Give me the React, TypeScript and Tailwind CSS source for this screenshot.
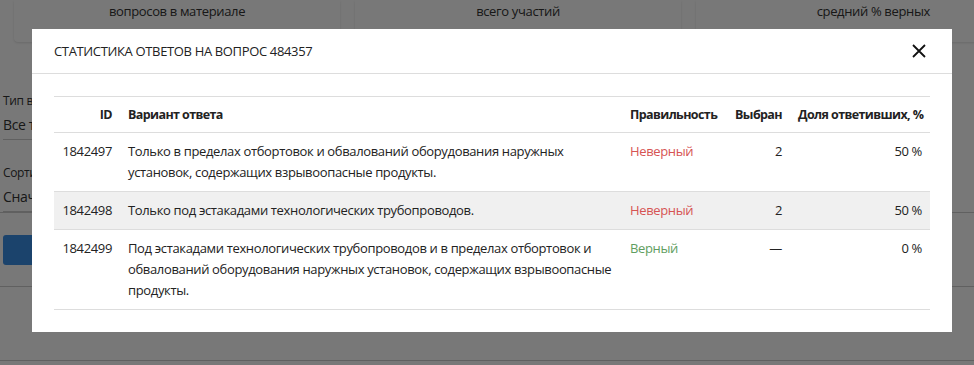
import React from "react";

type Answer = {
  id: number;
  text: string;
  correct: boolean;
  chosen: string;
  share: string;
};

const answers: Answer[] = [
  {
    id: 1842497,
    text: "Только в пределах отбортовок и обвалований оборудования наружных установок, содержащих взрывоопасные продукты.",
    correct: false,
    chosen: "2",
    share: "50 %",
  },
  {
    id: 1842498,
    text: "Только под эстакадами технологических трубопроводов.",
    correct: false,
    chosen: "2",
    share: "50 %",
  },
  {
    id: 1842499,
    text: "Под эстакадами технологических трубопроводов и в пределах отбортовок и обвалований оборудования наружных установок, содержащих взрывоопасные продукты.",
    correct: true,
    chosen: "—",
    share: "0 %",
  },
];

const stats = ["вопросов в материале", "всего участий", "средний % верных"];

const Background = () => (
  <div className="text-[#333]">
    <div className="flex h-[42px] gap-[15px] pl-[14px]">
      {stats.map((s, i) => (
        <div
          key={s}
          className={
            i === 2
              ? "flex w-[326px] shrink-0 justify-end rounded-b bg-white pr-[92px] text-[13px] shadow-sm"
              : "flex w-[326px] shrink-0 justify-center rounded-b bg-white text-[13px] shadow-sm"
          }
        >
          <span className="pt-[1px] leading-5">{s}</span>
        </div>
      ))}
    </div>
    <div className="mt-[51px] px-[3px]">
      <div className="w-[260px]">
        <div className="text-[12px] leading-4">Тип вопроса</div>
        <div className="mt-[6px] border-b border-[#ccc] pb-[4px] text-[14px] leading-5">
          Все типы
        </div>
        <div className="mt-[25px] text-[12px] leading-4">Сортировка</div>
        <div className="mt-[6px] border-b border-[#ccc] pb-[4px] text-[14px] leading-5">
          Сначала новые
        </div>
        <button className="mt-[23px] h-[30px] w-[140px] rounded-[3px] bg-[#3a8ee6] text-[14px] text-white">
          Искать
        </button>
      </div>
    </div>
    <div className="mt-[21px] border-b border-[#ccc]" />
    <div className="mt-[73px] border-b border-[#ccc]" />
  </div>
);

const CloseIcon = () => (
  <svg width="16" height="16" viewBox="0 0 16 16" fill="none">
    <path d="M2 2L14 14M14 2L2 14" stroke="#111" strokeWidth="1.8" />
  </svg>
);

export default function App() {
  return (
    <div
      className="relative h-[365px] w-[974px] overflow-hidden bg-white tracking-[-0.35px]"
      style={{ fontFamily: '"Open Sans", "Noto Sans", sans-serif' }}
    >
      <div className="absolute inset-x-0 top-[212px] border-b border-[#ccc]" />
      <Background />
      <div className="absolute inset-0 bg-black/[0.53]" />
      <div className="absolute left-[32px] top-[29px] w-[920px] bg-white text-[13px] text-[#222]">
        <div className="flex items-center justify-between border-b border-[#ddd] py-[12px] pl-[22px] pr-[23px]">
          <h2 className="leading-5 uppercase">Статистика ответов на вопрос 484357</h2>
          <button className="flex h-5 w-5 items-center justify-center">
            <CloseIcon />
          </button>
        </div>
        <div className="p-[22px]">
          <table className="w-full table-fixed border-collapse leading-[21px]">
            <colgroup>
              <col className="w-[66px]" />
              <col className="w-[502px]" />
              <col className="w-[105px]" />
              <col className="w-[63px]" />
              <col className="w-[140px]" />
            </colgroup>
            <thead>
              <tr className="border-y border-[#ddd] text-[12.5px] font-bold tracking-[-0.6px]">
                <th className="px-2 py-[7px] text-right">ID</th>
                <th className="px-2 py-[7px] text-left">Вариант ответа</th>
                <th className="px-2 py-[7px] text-left whitespace-nowrap">Правильность</th>
                <th className="px-2 py-[7px] text-right whitespace-nowrap">Выбран</th>
                <th className="px-2 py-[7px] text-right whitespace-nowrap">Доля ответивших, %</th>
              </tr>
            </thead>
            <tbody>
              {answers.map((a, i) => (
                <tr
                  key={a.id}
                  className={
                    i % 2 === 1
                      ? "border-b border-[#ddd] bg-[#f0f0f0] align-top"
                      : "border-b border-[#ddd] align-top"
                  }
                >
                  <td className="px-2 py-2 text-right">{a.id}</td>
                  <td className="px-2 py-2">{a.text}</td>
                  <td
                    className={
                      a.correct
                        ? "px-2 py-2 text-[#5f9e5f]"
                        : "px-2 py-2 text-[#d65454]"
                    }
                  >
                    {a.correct ? "Верный" : "Неверный"}
                  </td>
                  <td className="px-2 py-2 text-right">{a.chosen}</td>
                  <td className="px-2 py-2 text-right">{a.share}</td>
                </tr>
              ))}
            </tbody>
          </table>
        </div>
      </div>
    </div>
  );
}
